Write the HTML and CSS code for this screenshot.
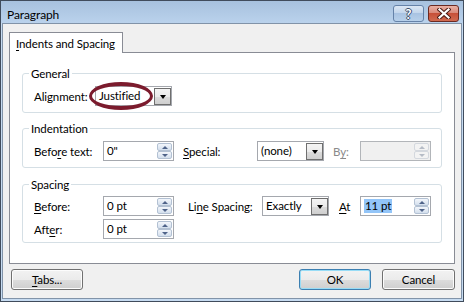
FILE: index.html
```html
<!DOCTYPE html>
<html lang="en">
<head>
    <meta charset="UTF-8">
    <title>Paragraph</title>
    <link rel="stylesheet" href="styles.css">
</head>
<body>
    <div class="window">
        <div class="titlebar">
            <span class="title">Paragraph</span>
            <div class="caption-buttons">
                <div class="cap help">?</div>
                <div class="cap close">
                    <svg width="14" height="11" viewBox="0 0 14 11">
                        <path d="M2.5 1.5 L11.5 9.5 M11.5 1.5 L2.5 9.5" stroke="#4a1a14" stroke-width="4.2" stroke-linecap="square"/>
                        <path d="M2.5 1.5 L11.5 9.5 M11.5 1.5 L2.5 9.5" stroke="#ffffff" stroke-width="2.2" stroke-linecap="square"/>
                    </svg>
                </div>
            </div>
        </div>

        <div class="client">
            <div class="tabs">
                <div class="tab active"><u>I</u>ndents and Spacing</div>
            </div>

            <div class="panel">
                <fieldset class="group">
                    <legend>General</legend>
                    <div class="row">
                        <span class="lbl w-align">Alignment:</span>
                        <div class="combo w-wide">
                            <span class="value">Justified</span>
                            <span class="drop"></span>
                            <span class="ring"></span>
                        </div>
                    </div>
                </fieldset>

                <fieldset class="group">
                    <legend>Indentation</legend>
                    <div class="row">
                        <span class="lbl w-first">Befo<u>r</u>e text:</span>
                        <div class="field">
                            <span class="value">0"</span>
                            <span class="spin"><span class="up"></span><span class="down"></span></span>
                        </div>
                        <span class="lbl w-mid gap-9"><u>S</u>pecial:</span>
                        <div class="combo">
                            <span class="value">(none)</span>
                            <span class="drop"></span>
                        </div>
                        <span class="lbl w-by gap-9 disabled">B<u>y</u>:</span>
                        <div class="field disabled">
                            <span class="value"></span>
                            <span class="spin"><span class="up"></span><span class="down"></span></span>
                        </div>
                    </div>
                </fieldset>

                <fieldset class="group spacing">
                    <legend>Spacing</legend>
                    <div class="row">
                        <span class="lbl w-first"><u>B</u>efore:</span>
                        <div class="field">
                            <span class="value">0 pt</span>
                            <span class="spin"><span class="up"></span><span class="down"></span></span>
                        </div>
                        <span class="lbl w-mid gap-14">Li<u>n</u>e Spacing:</span>
                        <div class="combo">
                            <span class="value">Exactly</span>
                            <span class="drop"></span>
                        </div>
                        <span class="lbl w-at gap-10"><u>A</u>t</span>
                        <div class="field">
                            <span class="value"><span class="sel">11 pt</span></span>
                            <span class="spin"><span class="up"></span><span class="down"></span></span>
                        </div>
                    </div>
                    <div class="row">
                        <span class="lbl w-first">Aft<u>e</u>r:</span>
                        <div class="field">
                            <span class="value">0 pt</span>
                            <span class="spin"><span class="up"></span><span class="down"></span></span>
                        </div>
                    </div>
                </fieldset>
            </div>

            <div class="footer">
                <button class="btn tabs-btn"><u>T</u>abs...</button>
                <div class="spacer"></div>
                <button class="btn default">OK</button>
                <button class="btn cancel">Cancel</button>
            </div>
        </div>
    </div>
</body>
</html>
```

FILE: styles.css
```css
body {
    margin: 0;
    font-family: "Lato", "Noto Sans", sans-serif;
    font-size: 11.5px;
    letter-spacing: -0.1px;
    color: #000;
}

u {
    text-decoration: underline;
    text-underline-offset: 2px;
}

.window {
    width: 464px;
    height: 302px;
    box-sizing: border-box;
    border: 1px solid #404c5c;
    background: #c6dbf1;
    display: flex;
    flex-direction: column;
}

/* title bar */
.titlebar {
    height: 22px;
    display: flex;
    align-items: flex-start;
    padding: 0 4px 0 6px;
    background: linear-gradient(#a7c1de, #bad2ec);
}

.title {
    flex: 1;
    padding-top: 6px;
    font-size: 12px;
}

.caption-buttons {
    display: flex;
    gap: 4px;
    padding-top: 4px;
}

.cap {
    width: 31px;
    height: 17px;
    box-sizing: border-box;
    border-radius: 3px;
    display: flex;
    align-items: center;
    justify-content: center;
}

.help {
    border: 1px solid #6582a8;
    background: linear-gradient(#dbe7f4 0%, #c3d6ec 45%, #a9c3e2 50%, #b7d0ea 100%);
    color: #fff;
    font-weight: bold;
    font-size: 13px;
    text-shadow: 1px 0 #3c4f6b, -1px 0 #3c4f6b, 0 1px #3c4f6b, 0 -1px #3c4f6b;
}

.close {
    border: 1px solid #6b2a22;
    background: linear-gradient(#e9b0a4 0%, #d98a7a 45%, #c75038 50%, #d06a50 100%);
}

/* client */
.client {
    flex: 1;
    margin: 0 1px 2px 1px;
    border: 1px solid #8193a8;
    background: #f0f0f0;
    padding: 8px 6px 0 6px;
    display: flex;
    flex-direction: column;
}

.tabs {
    display: flex;
}

.tab {
    width: 114px;
    height: 21px;
    box-sizing: border-box;
    padding: 4px 0 0 6px;
    border: 1px solid #898c95;
    border-bottom: none;
    background: #fff;
    margin-bottom: -1px;
    position: relative;
    z-index: 1;
}

.panel {
    height: 212px;
    box-sizing: border-box;
    border: 1px solid #898c95;
    background: #fff;
    padding: 13px 12px 0 12px;
}

.group {
    margin: 8px 0 0 0;
    padding: 5px 10px 6px 11px;
    border: 1px solid #d5dfe5;
    border-radius: 3px;
    min-width: 0;
}

.group:first-child {
    margin-top: 0;
}

.group.spacing {
    margin-top: 9px;
    padding-top: 4px;
    padding-bottom: 3px;
}

.group legend {
    padding: 0 2px;
    margin-left: -5px;
    line-height: 15px;
}

.row {
    display: flex;
    align-items: center;
    height: 20px;
}

.spacing .row + .row {
    margin-top: 3px;
}

.lbl {
    white-space: nowrap;
}

.disabled {
    color: #8a8a8a;
}

.w-align { width: 61px; }
.w-first { width: 69px; }
.w-mid { width: 74px; }
.w-by { width: 27px; }
.w-at { width: 21px; }
.gap-9 { margin-left: 9px; }
.gap-10 { margin-left: 10px; }
.gap-14 { margin-left: 14px; }

/* text box with spinner */
.field {
    width: 71px;
    height: 20px;
    box-sizing: border-box;
    border: 1px solid #a5a8ae;
    background: #fff;
    padding: 1px;
    display: flex;
}

.field .value {
    flex: 1;
    padding-left: 2px;
    line-height: 16px;
}

.sel {
    background: #93c5f8;
    padding: 0 1px;
    display: inline-block;
    line-height: 14px;
}

.spin {
    width: 15px;
    display: flex;
    flex-direction: column;
}

.spin span {
    flex: 1;
    border: 1px solid #b3c1d3;
    border-radius: 2px;
    background: linear-gradient(#f3f6fb, #d3dfed);
    display: flex;
    align-items: center;
    justify-content: center;
}

.spin span::after {
    content: "";
    border-left: 3px solid transparent;
    border-right: 3px solid transparent;
}

.spin .up::after { border-bottom: 3px solid #4f6389; }
.spin .down::after { border-top: 3px solid #4f6389; }

.field.disabled {
    background: #f0f0f0;
    border-color: #b2b5b9;
}

.field.disabled .spin span {
    border-color: #d4d8de;
    background: #f3f3f3;
}

.field.disabled .spin .up::after { border-bottom-color: #b6bcc6; }
.field.disabled .spin .down::after { border-top-color: #b6bcc6; }

/* combo box */
.combo {
    width: 67px;
    height: 20px;
    box-sizing: border-box;
    border: 1px solid #a5a8ae;
    background: #fff;
    padding: 1px 0 0 1px;
    display: flex;
    position: relative;
}

.combo.w-wide {
    width: 77px;
}

.combo .value {
    flex: 1;
    padding-left: 2px;
    line-height: 16px;
}

.combo .drop {
    width: 17px;
    height: 17px;
    box-sizing: border-box;
    border: 1px solid #6f6f6f;
    background: linear-gradient(#f4f4f4 0%, #ebebeb 50%, #dcdcdc 51%, #cfcfcf 100%);
    display: flex;
    align-items: center;
    justify-content: center;
}

.combo .drop::after {
    content: "";
    border-left: 3.5px solid transparent;
    border-right: 3.5px solid transparent;
    border-top: 4px solid #000;
}

/* hand-drawn highlight around the alignment value */
.ring {
    position: absolute;
    left: -7px;
    top: -5px;
    width: 64px;
    height: 28px;
    box-sizing: border-box;
    border: 4px solid #7b1b2d;
    border-left-width: 3px;
    border-right-width: 3px;
    border-radius: 50%;
}

/* dialog buttons */
.footer {
    display: flex;
    margin-top: 5px;
}

.spacer {
    flex: 1;
}

.btn {
    width: 72px;
    height: 21px;
    box-sizing: border-box;
    border: 1px solid #707070;
    border-radius: 3px;
    background: linear-gradient(#f2f2f2 0%, #ebebeb 50%, #dddddd 51%, #cfcfcf 100%);
    box-shadow: inset 0 0 0 1px #fcfcfc;
    font-family: inherit;
    font-size: 11.5px;
    letter-spacing: -0.1px;
    padding: 0;
    color: #000;
}

.tabs-btn {
    margin-left: 2px;
}

.btn.default {
    border-color: #3c7fb1;
    box-shadow: inset 0 0 0 1px #97dcf6;
}

.btn.cancel {
    width: 73px;
    margin-left: 11px;
}
```
